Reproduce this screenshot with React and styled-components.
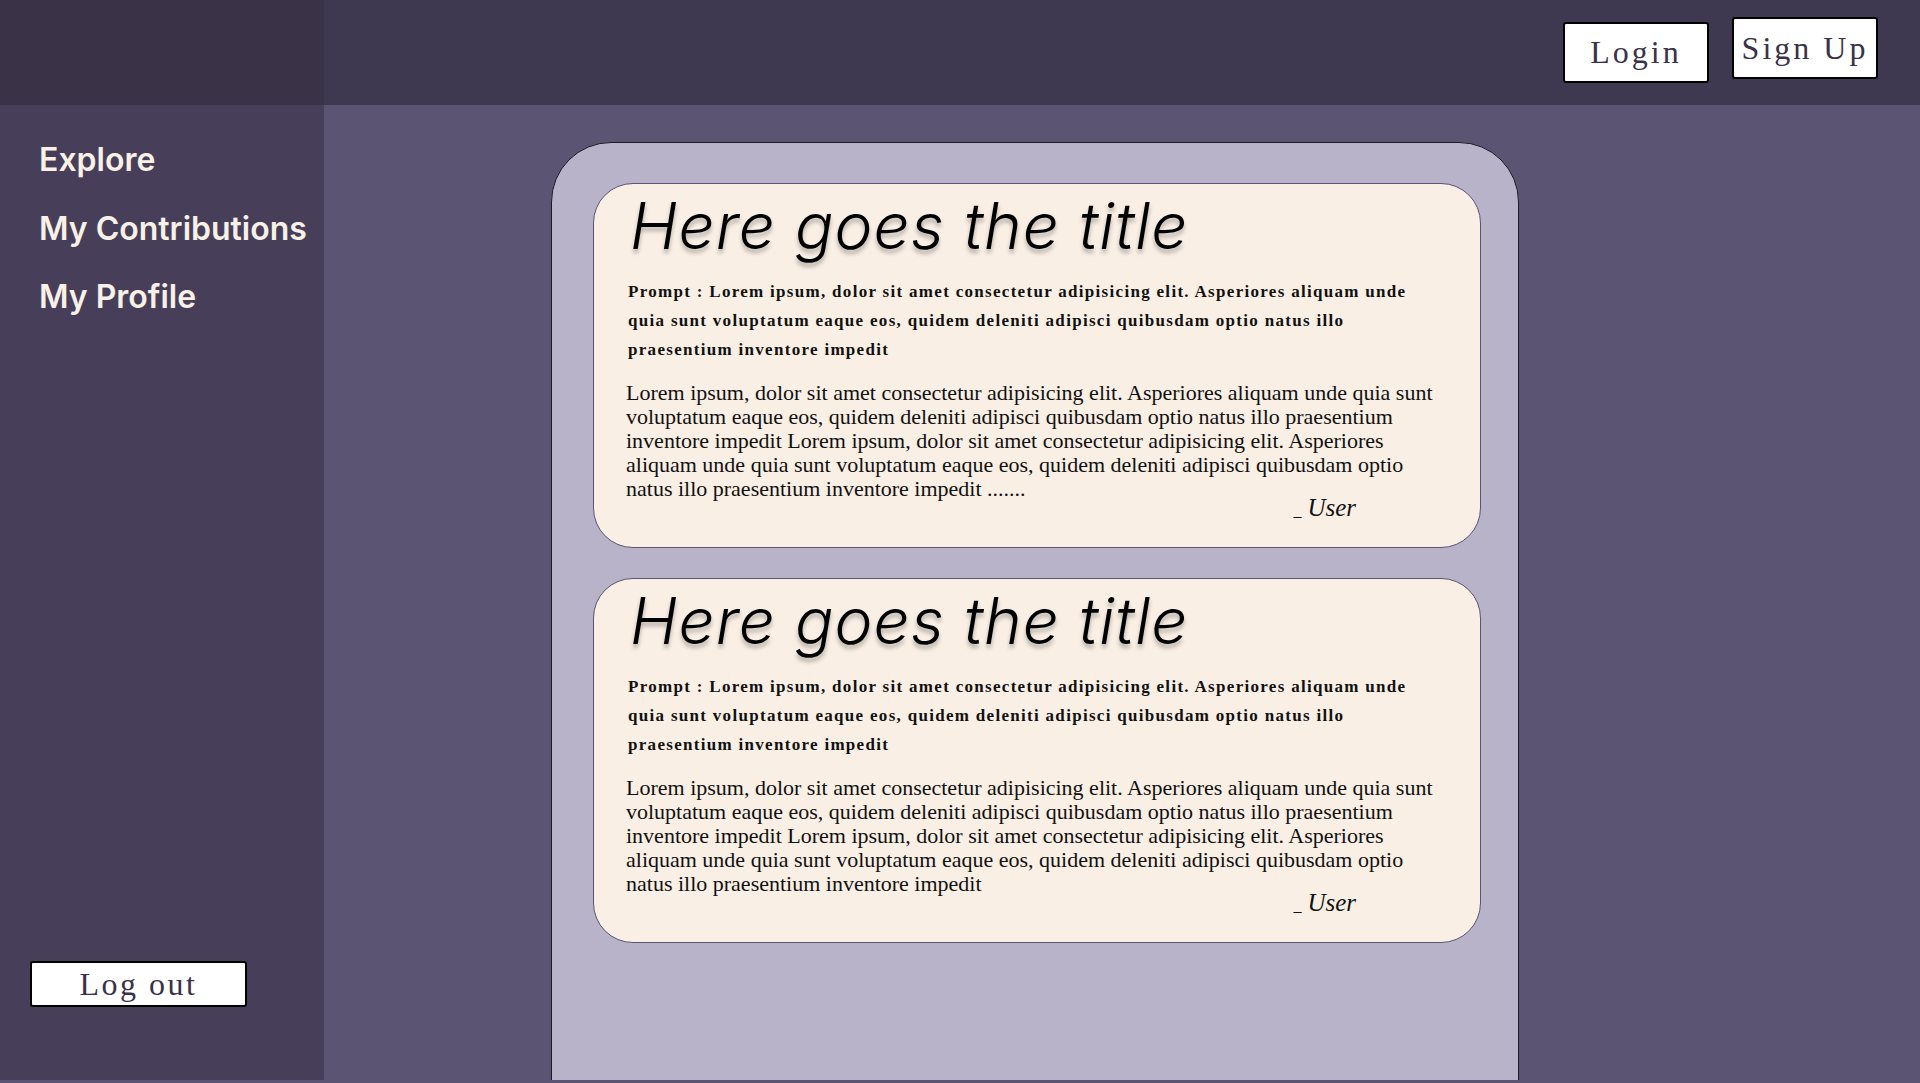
import styled, { createGlobalStyle } from "styled-components"

const GlobalStyle = createGlobalStyle`
	html, body {
		margin: 0;
		padding: 0;
		background: #5c5473;
		overflow: hidden;
	}
	* {
		box-sizing: border-box;
	}
`

const Page = styled.div`
	width: 1920px;
	height: 1083px;
	display: grid;
	grid-template-columns: 324px 1fr;
	grid-template-rows: 105px 975px;
	overflow: hidden;
`

const Corner = styled.div`
	background: #3a3348;
`

const Header = styled.header`
	background: #3e3850;
	display: flex;
	justify-content: flex-end;
	align-items: flex-start;
	gap: 23px;
	padding-right: 42px;
`

const AuthButton = styled.button`
	width: 146px;
	height: ${({ tall }) => (tall ? "62px" : "61px")};
	margin-top: ${({ raised }) => (raised ? "17px" : "22px")};
	background: #ffffff;
	border: 2px solid #000;
	border-radius: 3px;
	font-family: "Liberation Serif", serif;
	font-size: 32px;
	letter-spacing: 3px;
	color: #3a3248;
	cursor: pointer;
	padding: 0;
`

const Sidebar = styled.nav`
	background: #473f5a;
	display: flex;
	flex-direction: column;
	padding: 35px 0 73px 0;
`

const NavLink = styled.a`
	font-family: Inter, sans-serif;
	font-weight: 600;
	font-size: 32px;
	line-height: 39px;
	color: #f9f0e6;
	margin-left: 39px;
	margin-bottom: 30px;
	cursor: pointer;
	&:nth-child(2) {
		margin-bottom: 29px;
	}
`

const LogoutButton = styled(AuthButton)`
	margin-top: auto;
	margin-left: 30px;
	width: 217px;
	height: 46px;
	line-height: 40px;
	letter-spacing: 2.5px;
`

const Main = styled.main`
	overflow: hidden;
	padding: 37px 0 0 227px;
`

const Panel = styled.section`
	width: 968px;
	height: 1100px;
	background: #b8b3c8;
	border: 1px solid #1c1a26;
	border-radius: 60px;
	padding: 40px 37px 0 41px;
	display: flex;
	flex-direction: column;
	gap: 30px;
`

const Card = styled.article`
	height: 365px;
	background: #f9efe5;
	border: 1px solid #5c5473;
	border-radius: 40px;
	padding: 0 36px 0 32px;
	display: flex;
	flex-direction: column;
`

const Title = styled.h2`
	margin: 4px 0 14px 4px;
	font-family: Inter, sans-serif;
	font-style: italic;
	font-weight: 300;
	font-size: 64px;
	line-height: 75px;
	letter-spacing: 1px;
	color: #000;
	text-shadow: 0 4px 4px rgba(0, 0, 0, 0.28);
`

const Prompt = styled.p`
	margin: 0 0 17px 2px;
	font-family: "Liberation Serif", serif;
	font-weight: 700;
	font-size: 17px;
	line-height: 29px;
	letter-spacing: 1.3px;
	color: #111;
`

const Body = styled.p`
	margin: 0;
	font-family: "Liberation Serif", serif;
	font-size: 22px;
	line-height: 24px;
	color: #111;
`

const Signature = styled.div`
	align-self: flex-end;
	margin: 0 88px 0 0;
	font-family: "Liberation Serif", serif;
	font-style: italic;
	font-size: 25px;
	line-height: 12px;
	padding-top: 1px;
	color: #111;
	span {
		font-size: 16px;
		margin-right: 6px;
	}
`

const prompt =
	"Prompt : Lorem ipsum, dolor sit amet consectetur adipisicing elit. Asperiores aliquam unde quia sunt voluptatum eaque eos, quidem deleniti adipisci quibusdam optio natus illo praesentium inventore impedit"
const body =
	"Lorem ipsum, dolor sit amet consectetur adipisicing elit. Asperiores aliquam unde quia sunt voluptatum eaque eos, quidem deleniti adipisci quibusdam optio natus illo praesentium inventore impedit Lorem ipsum, dolor sit amet consectetur adipisicing elit. Asperiores aliquam unde quia sunt voluptatum eaque eos, quidem deleniti adipisci quibusdam optio natus illo praesentium inventore impedit"

const posts = [
	{ id: 1, title: "Here goes the title", prompt, body: body + " ......." },
	{ id: 2, title: "Here goes the title", prompt, body },
]

export default function App() {
	return (
		<>
			<GlobalStyle />
			<Page>
				<Corner />
				<Header>
					<AuthButton>Login</AuthButton>
					<AuthButton raised tall>
						Sign Up
					</AuthButton>
				</Header>
				<Sidebar>
					<NavLink>Explore</NavLink>
					<NavLink>My Contributions</NavLink>
					<NavLink>My Profile</NavLink>
					<LogoutButton>Log out</LogoutButton>
				</Sidebar>
				<Main>
					<Panel>
						{posts.map(post => (
							<Card key={post.id}>
								<Title>{post.title}</Title>
								<Prompt>{post.prompt}</Prompt>
								<Body>{post.body}</Body>
								<Signature>
									<span>_</span>User
								</Signature>
							</Card>
						))}
					</Panel>
				</Main>
			</Page>
		</>
	)
}
